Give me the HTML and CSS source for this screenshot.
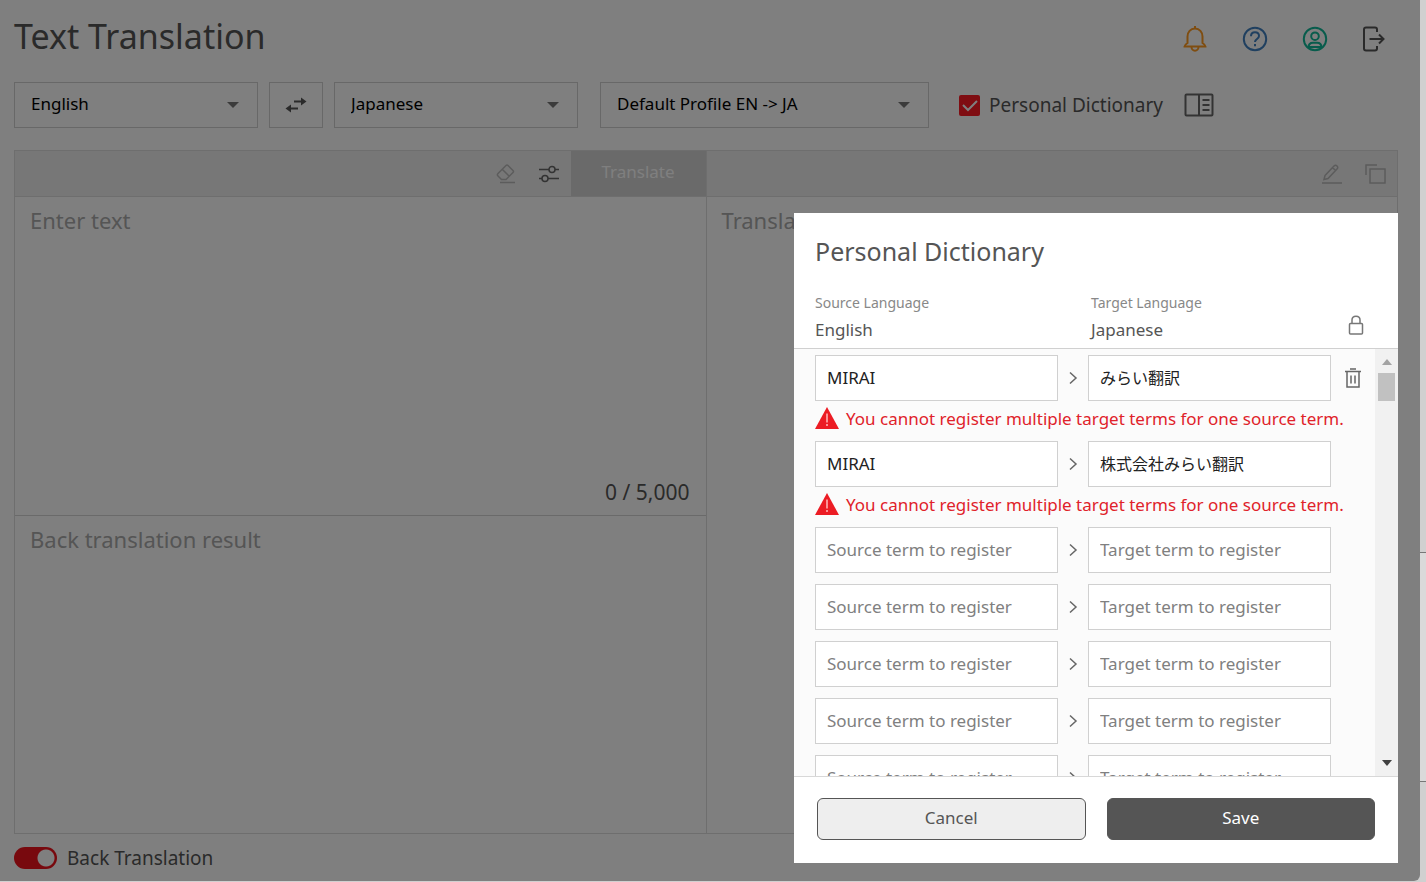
FILE: index.html
```
<!DOCTYPE html>
<html lang="en">
<head>
    <meta charset="UTF-8">
    <meta name="viewport" content="width=device-width, initial-scale=1.0">
    <title>Text Translation</title>
    <link rel="stylesheet" href="styles.css">
</head>
<body>
<div class="app">
    <header class="header">
        <h1>Text Translation</h1>
        <nav class="menu">
            <button class="icon-btn bell" aria-label="Notifications">
                <svg width="26" height="28" viewBox="0 0 26 28"><path d="M13 1v2.500M13 3.500c-4.500 0-7.500 3.500-7.500 8v6.500c-1.500 1-3 2-3 3.500h21c0-1.500-1.500-2.500-3-3.500v-6.500c0-4.500-3-8-7.500-8zM9.500 22a3.500 3.800 0 0 0 7 0"/></svg>
            </button>
            <button class="icon-btn help" aria-label="Help">
                <svg width="26" height="28" viewBox="0 0 26 28"><circle cx="13" cy="14" r="11.200"/><path d="M9 11.200c0-2.400 1.700-3.900 4-3.900s4 1.500 4 3.700c0 3-4 3-4 6"/><path d="M13 19v2.200"/></svg>
            </button>
            <button class="icon-btn user" aria-label="Account">
                <svg width="26" height="28" viewBox="0 0 26 28"><circle cx="13" cy="14" r="11.200"/><circle cx="13" cy="11.200" r="3.800"/><path d="M6.500 22.500c0-3.500 2-4.800 4.500-4.800h4c2.500 0 4.500 1.300 4.500 4.800M7 22h12"/></svg>
            </button>
            <button class="icon-btn logout" aria-label="Log out">
                <svg width="26" height="28" viewBox="0 0 26 28"><path d="M15 7V4.500c0-1-.8-2-2-2H4c-1.200 0-2 1-2 2v19c0 1 .8 2 2 2h9c1.200 0 2-1 2-2V21M7.500 14H21.500M17 9.500l4.500 4.500-4.500 4.500"/></svg>
            </button>
        </nav>
    </header>

    <div class="settings">
        <select class="select lang-from" aria-label="Source language"><option>English</option></select>
        <button class="swap" aria-label="Swap languages">
            <svg width="22" height="16" viewBox="0 0 22 16"><path d="M9 4.500h8M13 11.500H5" stroke="#555" stroke-width="2"/><path d="M16 .5l5.500 4L16 8.500zM6 7.500L.5 11.500l5.500 4z" fill="#555"/></svg>
        </button>
        <select class="select lang-to" aria-label="Target language"><option>Japanese</option></select>
        <select class="select profile" aria-label="Profile"><option>Default Profile EN -&gt; JA</option></select>
        <label class="check"><input type="checkbox" checked>Personal Dictionary</label>
        <button class="icon-btn book" aria-label="Open dictionary">
            <svg width="30" height="24" viewBox="0 0 30 24"><rect x="1.500" y="1.500" width="27" height="21" rx="1"/><path d="M15 1.500v21M18.500 7h7M18.500 12h7M18.500 17h7"/></svg>
        </button>
    </div>

    <main class="panels">
        <section class="panel">
            <div class="toolbar">
                <button class="icon-btn pale" aria-label="Clear">
                    <svg width="22" height="22" viewBox="0 0 22 22"><path d="M3 10.500L11 2.500c.7-.7 1.300-.7 2 0l5 5c.7.700.7 1.300 0 2L11 16.500H6.500L3 13c-.8-.8-.8-1.700 0-2.500zM7.500 6.500l7 7M5 19.500h15"/></svg>
                </button>
                <button class="icon-btn" aria-label="Options">
                    <svg width="22" height="22" viewBox="0 0 22 22"><path d="M1 6.500h10M17 6.500h4M1 15.500h3M10 15.500h11"/><circle cx="14" cy="6.500" r="3"/><circle cx="7" cy="15.500" r="3"/></svg>
                </button>
                <button class="translate">Translate</button>
            </div>
            <div class="field source">
                <textarea aria-label="Source text" placeholder="Enter text"></textarea>
                <span class="count">0 / 5,000</span>
            </div>
            <div class="field back">
                <textarea aria-label="Back translation" placeholder="Back translation result" readonly></textarea>
            </div>
        </section>
        <section class="panel">
            <div class="toolbar right">
                <button class="icon-btn pale" aria-label="Edit">
                    <svg width="22" height="22" viewBox="0 0 22 22"><path d="M4 12.500L13 3c1-1 2-1 3 0s1 2 0 3l-9 9.500-4 1zM11.500 4.500l3 3M1 20h20"/></svg>
                </button>
                <button class="icon-btn pale" aria-label="Copy">
                    <svg width="22" height="22" viewBox="0 0 22 22"><path d="M2 12V2h11"/><rect x="6" y="6" width="15" height="14"/></svg>
                </button>
            </div>
            <div class="field">
                <textarea aria-label="Translation" placeholder="Translation result" readonly></textarea>
            </div>
        </section>
    </main>

    <footer class="bottom">
        <label class="toggle"><input type="checkbox" role="switch" checked>Back Translation</label>
    </footer>

    <div class="backdrop"></div>

    <div class="modal" role="dialog" aria-labelledby="dictTitle">
        <div class="modal-head">
            <h2 id="dictTitle">Personal Dictionary</h2>
            <div class="langs">
                <div><span class="caption">Source Language</span><span class="lang">English</span></div>
                <div><span class="caption">Target Language</span><span class="lang">Japanese</span></div>
                <svg class="lock" width="16" height="20" viewBox="0 0 16 20"><rect x="1.500" y="8.500" width="13" height="10.500" rx="1"/><path d="M4 8.500V5c0-5 8-5 8 0v3.500"/></svg>
            </div>
        </div>
        <div class="modal-body">
            <div class="terms" id="terms"></div>
            <div class="scrollbar">
                <svg width="10" height="6" viewBox="0 0 10 6"><path d="M0 6l5-6 5 6z" fill="#a3a3a3"/></svg>
                <div class="thumb"></div>
                <svg class="down" width="10" height="6" viewBox="0 0 10 6"><path d="M0 0l5 6 5-6z" fill="#404040"/></svg>
            </div>
        </div>
        <div class="modal-foot">
            <button class="btn cancel">Cancel</button>
            <button class="btn save">Save</button>
        </div>
    </div>
</div>
<div class="edge"><div class="edge-box"></div></div>
<script>
    const ERROR = 'You cannot register multiple target terms for one source term.';
    const rows = [
        { source: 'MIRAI', target: 'みらい翻訳', error: ERROR, removable: true },
        { source: 'MIRAI', target: '株式会社みらい翻訳', error: ERROR },
        {}, {}, {}, {}, {}
    ];
    const trash = '<button class="icon-btn" aria-label="Delete"><svg width="18" height="20" viewBox="0 0 18 20"><path d="M1 3.500h16M6 1h6M3 4v15h12V4M7 7.500v8M11 7.500v8"/></svg></button>';
    const chevron = '<svg class="chevron" width="10" height="14" viewBox="0 0 10 14"><path d="M2 1.500L8 7l-6 5.500"/></svg>';
    const warning = '<svg width="24" height="22" viewBox="0 0 24 22"><path d="M12 0l12 22H0z" fill="#ec1c24"/><path d="M12 6.500v9M12 17v2" stroke="#fbb" stroke-width="1.500"/></svg>';

    document.getElementById('terms').innerHTML = rows.map(function(row) {
        return '<div class="term">' +
            '<input type="text" aria-label="Source term" placeholder="Source term to register" value="' + (row.source || '') + '">' +
            chevron +
            '<input type="text" aria-label="Target term" placeholder="Target term to register" value="' + (row.target || '') + '"' + (row.target ? ' lang="ja"' : '') + '>' +
            (row.removable ? trash : '') +
            '</div>' +
            (row.error ? '<p class="error">' + warning + row.error + '</p>' : '');
    }).join('');
</script>
</body>
</html>
```
FILE: styles.css
```
* {
    box-sizing: border-box;
}
body {
    display: flex;
    margin: 0;
    height: 100vh;
    padding-bottom: 1px;
    background-color: #d0d0d0;
    color: #555;
    font-family: "Noto Sans", "Noto Sans CJK JP", sans-serif;
    font-size: 17px;
}
button, input, select, textarea {
    font: inherit;
    color: inherit;
}
.app {
    position: relative;
    display: flex;
    flex: 1;
    flex-direction: column;
    height: 100%;
    padding: 0 22px 0 14px;
    background-color: #fff;
    border-radius: 0 0 6px 0;
    overflow: hidden;
}
.header {
    display: flex;
    justify-content: space-between;
    align-items: center;
    height: 82px;
    padding-bottom: 4px;
}
h1 {
    margin: 0;
    padding-bottom: 6px;
    font-size: 34px;
    line-height: 44px;
    font-weight: 400;
}
.menu {
    display: flex;
    gap: 34px;
    padding-right: 10px;
}
.icon-btn {
    display: flex;
    padding: 0;
    border: none;
    background: none;
    cursor: pointer;
}
svg {
    flex: none;
    fill: none;
    stroke-width: 2;
}
.icon-btn svg {
    stroke: #666;
}
.menu svg {
    stroke: #555;
}
.menu .bell svg {
    stroke: #ff9a20;
}
.menu .help svg {
    stroke: #4080c0;
}
.menu .user svg {
    stroke: #10b898;
}
.settings {
    display: flex;
    align-items: center;
    height: 46px;
}
.select {
    height: 46px;
    padding: 0 16px 4px;
    border: 1px solid #d0d0d0;
    border-radius: 0;
    color: #000;
    background: #fff url("data:image/svg+xml,%3Csvg xmlns='http://www.w3.org/2000/svg' width='12' height='6'%3E%3Cpath d='M0 0h12L6 6z' fill='%23777'/%3E%3C/svg%3E") no-repeat right 18px center;
    appearance: none;
}
.lang-from, .lang-to {
    width: 244px;
}
.swap {
    display: flex;
    align-items: center;
    justify-content: center;
    width: 54px;
    height: 46px;
    margin: 0 11px;
    padding: 0;
    border: 1px solid #d0d0d0;
    background: none;
}
.profile {
    width: 329px;
    margin-left: 22px;
}
.check {
    display: flex;
    align-items: center;
    gap: 9px;
    margin-left: 30px;
    font-size: 19px;
}
.check input {
    width: 21px;
    height: 21px;
    margin: 0;
    border-radius: 2px;
    background: #ff1a24 url("data:image/svg+xml,%3Csvg xmlns='http://www.w3.org/2000/svg' width='21' height='21'%3E%3Cpath d='M4 10l5 5 9-9' fill='none' stroke='white' stroke-width='2'/%3E%3C/svg%3E") center;
    appearance: none;
}
.book {
    margin-left: 21px;
}
.panels {
    display: flex;
    flex: 1;
    margin-top: 22px;
    border: 1px solid #dcdcdc;
}
.panel {
    display: flex;
    flex: 1;
    flex-direction: column;
}
.panel + .panel {
    border-left: 1px solid #dcdcdc;
}
.toolbar {
    display: flex;
    align-items: center;
    justify-content: flex-end;
    gap: 21px;
    height: 46px;
    border-bottom: 1px solid #dcdcdc;
    background-color: #eee;
}
.toolbar svg {
    stroke-width: 1.5;
}
.toolbar.right {
    padding-right: 11px;
}
.pale svg {
    stroke: #b8b8b8;
}
.translate {
    width: 135px;
    height: 100%;
    margin-left: -10px;
    padding: 0 0 4px;
    border: none;
    background-color: #d4d4d4;
    color: #fff;
}
.field {
    display: flex;
    flex: 1;
    flex-direction: column;
}
.source {
    border-bottom: 1px solid #d4d4d4;
}
textarea {
    flex: 1;
    padding: 8px 15px;
    border: none;
    background: none;
    font-size: 22px;
    resize: none;
}
textarea::placeholder {
    color: #aaa;
}
.count {
    padding: 0 16px 9px;
    font-size: 21px;
    text-align: right;
}
.bottom {
    display: flex;
    align-items: center;
    height: 47px;
}
.toggle {
    display: flex;
    align-items: center;
    gap: 10px;
    font-size: 19px;
}
.toggle input {
    width: 43px;
    height: 22px;
    margin: 0;
    border-radius: 11px;
    background: #f0121c radial-gradient(circle at 32px 11px, #fff 8px, transparent 9px);
    appearance: none;
}
.backdrop {
    position: absolute;
    inset: 0;
    background-color: rgba(0, 0, 0, 0.5);
}
/* dictionary dialog */
.modal {
    position: absolute;
    top: 213px;
    right: 22px;
    bottom: 18px;
    display: flex;
    flex-direction: column;
    width: 604px;
    background-color: #fff;
}
.modal-head {
    height: 136px;
    padding: 20px 34px 0 21px;
    border-bottom: 1px solid #d0d0d0;
}
h2 {
    margin: 0 0 20px;
    font-size: 25px;
    line-height: 36px;
    font-weight: 400;
}
.langs {
    display: grid;
    grid-template-columns: 1fr 257px 16px;
    align-items: end;
}
.caption, .lang {
    display: block;
    line-height: 27px;
}
.caption {
    color: #888;
    font-size: 14px;
}
.lock {
    margin-bottom: 8px;
    stroke: #777;
    stroke-width: 1.5;
}
.modal-body {
    display: flex;
    flex: 1;
    min-height: 0;
    background-color: #fbfbfb;
}
.terms {
    flex: 1;
    padding: 6px 0 0 21px;
    overflow: hidden;
}
.term {
    display: grid;
    grid-template-columns: 1fr 30px 1fr 44px;
    align-items: center;
    justify-items: center;
    margin-bottom: 11px;
}
.term input {
    width: 100%;
    height: 46px;
    padding: 0 11px 2px;
    border: 1px solid #d0d0d0;
    background-color: #fff;
    color: #222;
}
.term input:lang(ja) {
    font-size: 16px;
}
.term input::placeholder {
    color: #808080;
}
.term svg {
    stroke: #666;
    stroke-width: 1.5;
}
.error {
    display: flex;
    align-items: center;
    gap: 7px;
    height: 40px;
    margin: -11px 0 0;
    padding-bottom: 6px;
    color: #e0222a;
    white-space: nowrap;
}
.scrollbar {
    display: flex;
    flex-direction: column;
    align-items: center;
    width: 23px;
    padding: 10px 0;
    background-color: #f1f1f1;
}
.thumb {
    width: 17px;
    height: 28px;
    margin-top: 8px;
    background-color: #c1c1c1;
}
.down {
    margin-top: auto;
}
.modal-foot {
    display: flex;
    gap: 21px;
    padding: 21px 23px 23px;
    border-top: 1px solid #d8d8d8;
}
.btn {
    flex: 1;
    height: 42px;
    padding: 0 0 3px;
    border: 1px solid #555;
    border-radius: 6px;
}
.cancel {
    background-color: #eee;
}
.save {
    background-color: #555;
    color: #fff;
}
/* strip of the page behind */
.edge {
    display: flex;
    flex-direction: column;
    justify-content: flex-end;
    width: 6px;
    padding-bottom: 99px;
}
.edge-box {
    height: 230px;
    border: solid #777;
    border-width: 1px 0;
    background-color: #dadada;
}
```
